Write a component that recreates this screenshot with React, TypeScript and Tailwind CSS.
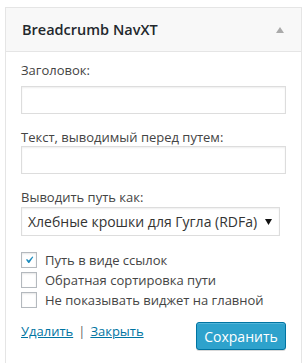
import React from "react";

const font = { fontFamily: '"Open Sans", "Noto Sans", sans-serif' };

function Check({ checked }: { checked?: boolean }) {
  return (
    <span className="flex h-[16px] w-[16px] shrink-0 items-center justify-center border border-[#b4b9be] bg-white shadow-[inset_0_1px_2px_rgba(0,0,0,0.1)]">
      {checked && (
        <svg width="14" height="14" viewBox="0 0 20 20">
          <path d="M14.83 4.89l1.34.94-5.81 8.38H9.02L5.78 9.67l1.34-1.25 2.57 2.4z" fill="#1e8cbe" />
        </svg>
      )}
    </span>
  );
}

export default function App() {
  return (
    <div className="min-h-[363px] bg-white pl-[5px] pr-[5px] pt-[7px]" style={font}>
      <div className="min-h-[360px] border border-[#e5e5e5] bg-white">
        <div className="flex h-[44px] items-center justify-between border-b border-[#e5e5e5] bg-[#f8f8f8] pl-[16px] pr-[17px]">
          <span className="text-[14.5px] font-semibold text-[#23282d]">Breadcrumb NavXT</span>
          <svg width="8" height="6" viewBox="0 0 8 6">
            <path d="M0 6L4 0L8 6Z" fill="#aaaaaa" />
          </svg>
        </div>
        <div className="px-[15px] pt-[9px] text-[13px] text-[#444]">
          <div className="leading-[18px]">Заголовок:</div>
          <div className="mt-[7px] h-[28px] w-[265px] border border-[#ddd] shadow-[inset_0_1px_2px_rgba(0,0,0,0.07)]" />
          <div className="mt-[14px] leading-[18px]">Текст, выводимый перед путем:</div>
          <div className="h-[28px] w-[265px] border border-[#ddd] shadow-[inset_0_1px_2px_rgba(0,0,0,0.07)]" />
          <div className="mt-[14px] leading-[18px]">Выводить путь как:</div>
          <div className="mt-[1px] flex h-[29px] w-[259px] items-center justify-between border border-[#ddd] pl-[6px] pr-[7px] shadow-[inset_0_1px_2px_rgba(0,0,0,0.07)]">
            <span className="text-[14px] text-[#333]">Хлебные крошки для Гугла (RDFa)</span>
            <svg width="7" height="6" viewBox="0 0 7 6">
              <path d="M0 0H7L3.5 6Z" fill="#111" />
            </svg>
          </div>
          <div className="mt-[16px] flex flex-col gap-[4px]">
            <label className="flex items-center gap-[8px] leading-[16px]">
              <Check checked />
              <span>Путь в виде ссылок</span>
            </label>
            <label className="flex items-center gap-[8px] leading-[16px]">
              <Check />
              <span>Обратная сортировка пути</span>
            </label>
            <label className="flex items-center gap-[8px] leading-[16px]">
              <Check />
              <span>Не показывать виджет на главной</span>
            </label>
          </div>
          <div className="mt-[14px] flex items-start justify-between">
            <div className="flex items-center gap-[5px] leading-[18px]">
              <a className="text-[#0074a2] underline">Удалить</a>
              <span className="text-[#666]">|</span>
              <a className="text-[#0074a2] underline">Закрыть</a>
            </div>
            <button className="h-[28px] w-[90px] rounded-[3px] border border-[#0074a2] bg-[#2ea2cc] text-[14px] text-white shadow-[inset_0_1px_0_rgba(120,200,230,0.5),0_1px_0_rgba(0,0,0,0.15)]">
              Сохранить
            </button>
          </div>
        </div>
      </div>
    </div>
  );
}
